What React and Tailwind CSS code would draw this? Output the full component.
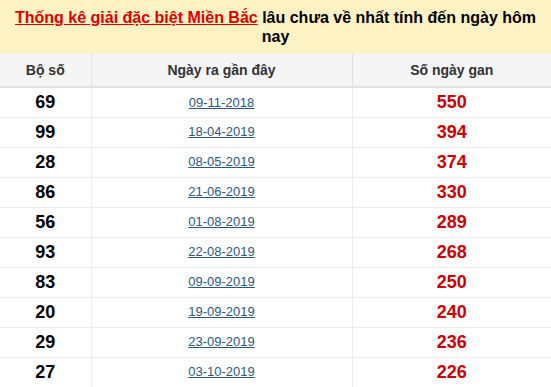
const rows = [
    ["69", "09-11-2018", 550],
    ["99", "18-04-2019", 394],
    ["28", "08-05-2019", 374],
    ["86", "21-06-2019", 330],
    ["56", "01-08-2019", 289],
    ["93", "22-08-2019", 268],
    ["83", "09-09-2019", 250],
    ["20", "19-09-2019", 240],
    ["29", "23-09-2019", 236],
    ["27", "03-10-2019", 226],
];

const App = () => {
    return (
        <div className="w-[551px] bg-white font-['Liberation_Sans',Arial,sans-serif]">
            <div className="bg-[#fdf2c4] h-[54px] pt-[8px] px-3 text-center text-[16px] leading-[19px] font-bold text-black">
                <a href="#" className="text-[#e10000] underline">Thống kê giải đặc biệt Miền Bắc</a> lâu chưa về nhất tính đến ngày hôm nay
            </div>

            <table className="w-full border-collapse">
                <thead>
                    <tr className="bg-[#f5f5f5] h-[33px] border-b-2 border-[#e2e2e2] text-[14px] font-bold text-[#333]">
                        <th className="w-[91px] border-r border-[#e2e2e2] font-bold">Bộ số</th>
                        <th className="w-[261px] border-r border-[#e2e2e2] font-bold">Ngày ra gần đây</th>
                        <th className="font-bold">Số ngày gan</th>
                    </tr>
                </thead>
                <tbody>
                    {rows.map(([num, date, gan], i) => (
                        <tr key={i} className="h-[30px] border-b border-[#ececec]">
                            <td className="border-r border-[#ececec] text-center text-[18px] font-bold text-black">{num}</td>
                            <td className="border-r border-[#ececec] text-center text-[13px]">
                                <a href="#" className="text-[#2b5887] underline">{date}</a>
                            </td>
                            <td className="text-center text-[18px] font-bold text-[#d10000]">{gan}</td>
                        </tr>
                    ))}
                </tbody>
            </table>
        </div>
    )
}

export default App;
